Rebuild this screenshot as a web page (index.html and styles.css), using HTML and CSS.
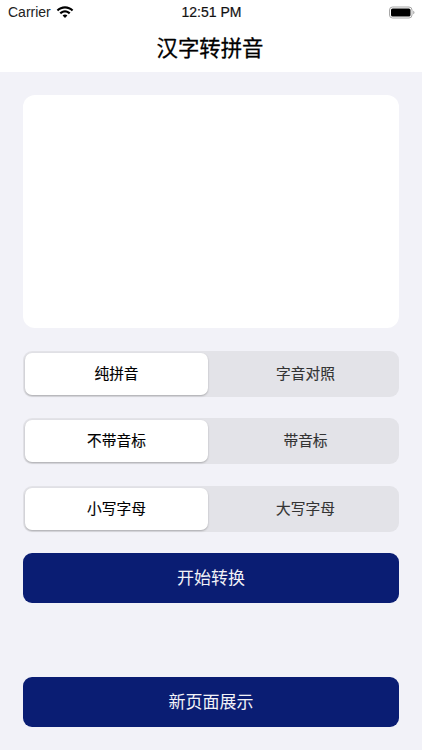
FILE: index.html
```html
<!DOCTYPE html>
<html lang="zh-CN">
<head>
	<meta charset="utf-8">
	<meta name="viewport" content="width=device-width,initial-scale=1">
	<title>汉字转拼音</title>
	<link rel="stylesheet" href="styles.css">
</head>
<body>
	<header class="top">
		<div class="status">
			<div class="status__left">
				<span class="status__carrier">Carrier</span>
				<svg class="status__wifi" width="18" height="13" viewBox="0 0 18 13" aria-hidden="true">
					<path d="M9 2.6c2.6 0 5 1 6.8 2.7L17.3 3.7C15.1 1.5 12.2.2 9 .2S2.9 1.5.7 3.7l1.5 1.6C4 3.6 6.4 2.6 9 2.6z"/>
					<path d="M9 6.6c1.5 0 2.9.6 3.9 1.6l1.6-1.6C13 5.1 11.1 4.2 9 4.2S5 5.1 3.5 6.6l1.6 1.6C6.1 7.2 7.5 6.6 9 6.6z"/>
					<path d="M9 8.4c-1 0-1.8.4-2.4 1L9 12l2.4-2.6c-.6-.6-1.4-1-2.4-1z"/>
				</svg>
			</div>
			<span class="status__time">12:51 PM</span>
			<svg class="status__battery" width="26" height="13" viewBox="0 0 26 13" aria-hidden="true">
				<rect x="0.5" y="1" width="22.5" height="11" rx="3" fill="none" stroke="#a8a8a8"/>
				<rect x="2" y="2.5" width="19.5" height="8" rx="1.6" fill="#000"/>
				<path d="M24.2 4.7c.8.3 1.3 1 1.3 1.8s-.5 1.5-1.3 1.8z" fill="#a8a8a8"/>
			</svg>
		</div>
		<h1 class="top__title">汉字转拼音</h1>
	</header>

	<main class="page">
		<div class="input-box"></div>

		<div class="segment segment--first">
			<div class="segment__item segment__item--on">纯拼音</div>
			<div class="segment__item">字音对照</div>
		</div>
		<div class="segment segment--second">
			<div class="segment__item segment__item--on">不带音标</div>
			<div class="segment__item">带音标</div>
		</div>
		<div class="segment segment--third">
			<div class="segment__item segment__item--on">小写字母</div>
			<div class="segment__item">大写字母</div>
		</div>

		<button class="action action--start">开始转换</button>
		<button class="action action--show">新页面展示</button>
	</main>
</body>
</html>
```

FILE: styles.css
```css
* {
	box-sizing: border-box;
}
html {
	height: 100%;
}
body {
	background-color: #f2f2f8;
	color: #000;
	display: flex;
	flex-direction: column;
	font-family: "Noto Sans CJK SC", "Liberation Sans", sans-serif;
	height: 100%;
	margin: 0;
}

/* TOP BAR */
.top {
	background-color: #fff;
	height: 72px;
}
.status {
	align-items: center;
	display: grid;
	grid-template-columns: 1fr auto 1fr;
	height: 24px;
	padding-inline: 8px 7px;
}
.status__left {
	align-items: center;
	display: flex;
	gap: 5px;
}
.status__carrier {
	color: #222;
	font-family: "Liberation Sans", sans-serif;
	font-size: 14px;
}
.status__time {
	color: #111;
	font-family: "Liberation Sans", sans-serif;
	font-size: 14px;
	-webkit-text-stroke: 0.2px #111;
}
.status__battery {
	justify-self: end;
}
.top__title {
	font-size: 21.4px;
	font-weight: 400;
	line-height: 30px;
	margin: 8px 2px 0 0;
	text-align: center;
	-webkit-text-stroke: 0.3px #000;
}

/* CONTENT */
.page {
	display: flex;
	flex: 1;
	flex-direction: column;
	padding: 23px;
}
.input-box {
	background-color: #fff;
	border-radius: 12px;
	height: 233px;
}
.segment {
	background-color: #e3e3e8;
	border-radius: 9px;
	column-gap: 6px;
	display: grid;
	grid-template-columns: 1fr 1fr;
	height: 46px;
	padding: 2px;
}
.segment--first {
	margin-top: 23px;
}
.segment--second {
	margin-top: 21px;
}
.segment--third {
	margin-top: 22px;
}
.segment__item {
	align-items: center;
	color: #333;
	display: flex;
	font-size: 14.7px;
	justify-content: center;
	padding-bottom: 4px;
	-webkit-text-stroke: 0.15px currentColor;
}
.segment__item--on {
	background-color: #fff;
	border-radius: 7px;
	box-shadow: 0 1px 2px rgba(0, 0, 0, 0.25);
	color: #000;
}
.action {
	background-color: #0a1d73;
	border: none;
	border-radius: 9px;
	color: #f2f2f7;
	font-family: inherit;
	font-size: 17px;
	height: 50px;
	padding: 0 0 4px;
}
.action--start {
	margin-top: 21px;
}
.action--show {
	margin-top: auto;
}
```
